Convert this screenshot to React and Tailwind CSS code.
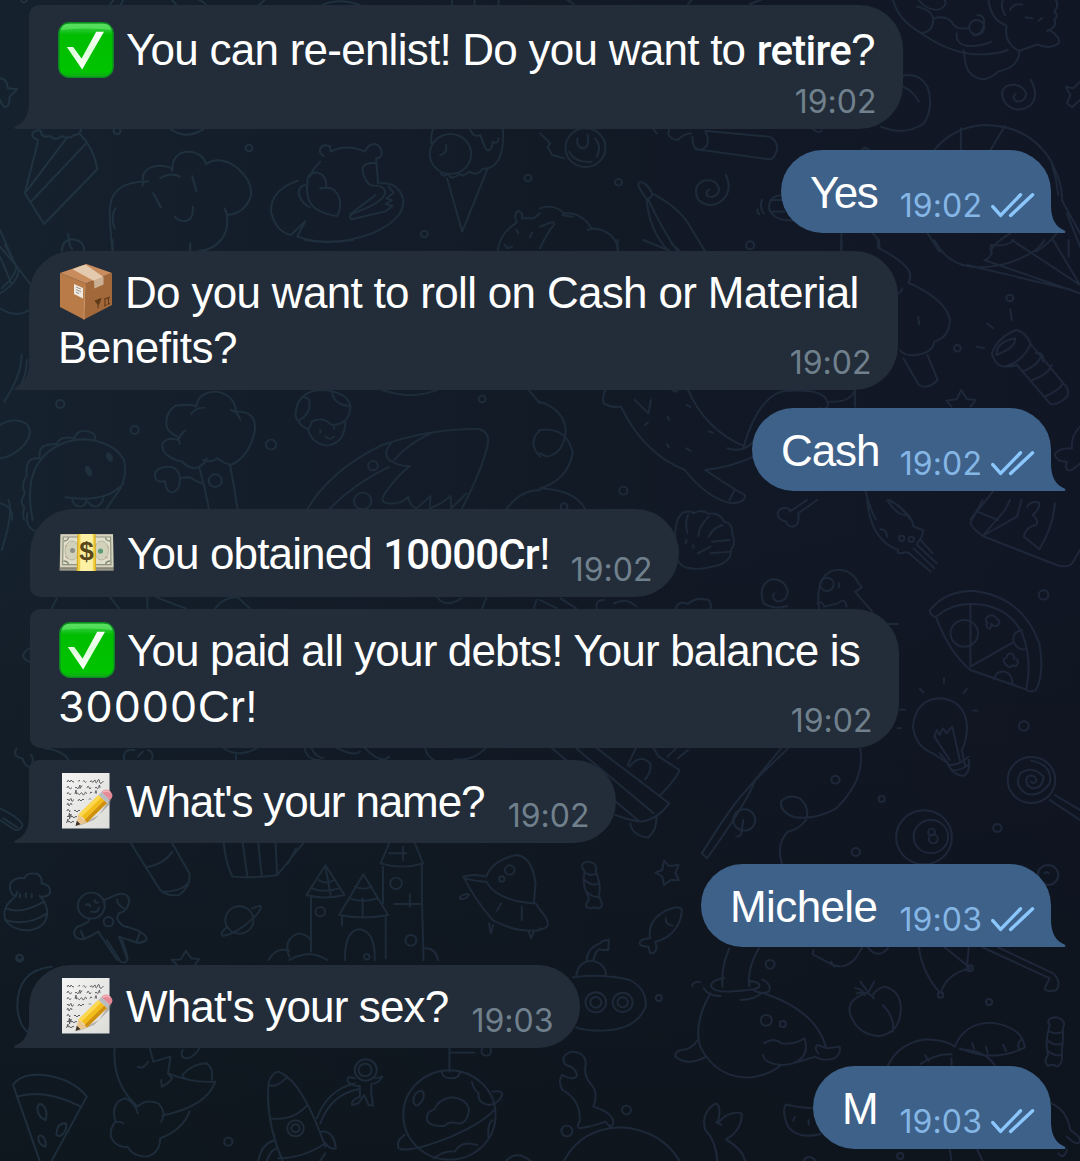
import React from "react";

/* ---------- Wallpaper ---------- */

/* Each tile of the wallpaper has its own origin; its paths are drawn on a finer grid. */
const tiles = [
  {
    x: 0,
    y: 0,
    d: `M110 425L72 580L128 672L283 507Q270 440 232 402M72 580L195 412M90 605L250 430M110 420Q90 415 95 398Q105 388 118 392Q120 415 145 408Q160 425 180 408Q200 420 215 405Q235 405 235 388
    M495 388Q540 420 590 388M327 755Q315 640 320 620Q325 550 415 545Q410 500 465 497Q500 500 500 512Q500 455 550 455Q590 460 598 492Q640 465 690 505Q735 545 728 590Q710 640 662 645M413 557Q418 540 430 545M465 535Q495 515 522 530M558 528L570 573M445 580L467 622M560 620Q562 665 533 663Q515 663 508 650M652 625Q665 650 657 690Q640 745 575 755M335 625Q320 650 333 685M552 735V755
    M198 702Q200 740 210 748M180 755Q178 720 212 718Q245 722 245 755M0 690L38 780M0 235Q20 235 23 265L50 268L28 290Q28 320 15 322Q5 315 0 300
    M940 468Q925 460 930 445Q940 430 958 440L960 455Q1005 430 1060 455Q1068 432 1090 432Q1110 440 1108 465Q1103 475 1092 475L1098 550M930 485Q905 510 900 530M893 545Q890 520 920 517Q948 525 948 560M893 545Q885 600 915 625Q945 645 980 648Q1000 600 970 570Q958 560 930 565M1092 490Q1055 485 1052 510Q1060 550 1080 557Q1120 555 1118 580Q1110 610 1025 640Q1010 648 1020 658L1118 635L1140 618L1120 612L1138 600L1122 595L1143 578L1128 560M1018 642L1090 585M865 542Q785 570 787 635Q800 695 845 705L887 663L863 710Q960 745 1080 700Q1180 655 1170 595Q1155 545 1105 550M885 555Q865 560 868 585Q880 615 900 622
    M1253 430Q1250 400 1258 388M1295 435Q1300 460 1278 465M1280 520Q1290 535 1300 520Q1310 545 1335 520Q1340 535 1362 515Q1385 530 1400 508Q1430 505 1440 490Q1465 460 1460 388M1298 535L1342 695L1415 508M1365 388Q1375 415 1395 405Q1405 440 1415 452Q1430 450 1430 425Q1445 435 1448 415
    M1445 755Q1450 700 1500 668Q1490 640 1505 632Q1520 640 1515 655L1550 655L1568 640M1500 690L1505 700M1545 698L1538 712M1465 735l10 10l12 -5
    M60 0q10 15 18 0M318 15L330 0M350 15L358 0M500 0L512 15M580 0L597 12M752 15L768 0M935 15Q985 -8 1045 15M1312 15V0M1378 15V0M1448 15V0`,
    c: [[340, 392, 10], [723, 444, 10], [1232, 702, 10], [1533, 534, 10], [1308, 462, 60]],
  },
  {
    x: 540,
    y: 0,
    d: `M80 0L98 12M430 12L440 0M610 12L640 0M1025 0Q1040 60 1105 98Q1190 160 1270 163Q1320 165 1358 150M1100 0Q1125 35 1160 28Q1185 15 1175 0M1095 20Q1140 30 1142 60Q1140 95 1110 98M1145 55Q1175 45 1195 65Q1205 90 1240 85M1210 100Q1205 130 1240 138Q1280 140 1310 125M1270 45q25 0 18 35q-10 30 -30 25M1302 0Q1310 60 1352 75M1350 45Q1335 15 1345 0M1355 80Q1345 125 1390 153L1445 133Q1480 150 1505 130Q1515 115 1480 90M1498 0q10 20 -5 35q15 10 0 25q10 20 -20 33M1410 52l20 3M1448 62l10 -8M1365 30Q1375 8 1400 14M1230 150Q1235 200 1245 215Q1285 260 1330 215Q1375 205 1385 180Q1395 165 1390 153
    M1425 240Q1450 285 1425 315Q1385 345 1352 310Q1330 275 1355 258Q1395 245 1412 280Q1410 305 1385 305Q1368 295 1380 282M1568 245L1548 265L1527 260L1540 285L1530 310L1545 322L1568 300
    M1050 228Q1100 215 1125 260Q1145 320 1115 370Q1060 410 990 380M1055 260Q1085 275 1100 305M108 415Q105 445 130 445Q145 430 138 405M160 415Q180 440 165 470M85 455Q100 490 150 485M0 400L30 430L22 440L35 465L70 475
    M540 525Q560 570 530 600Q495 630 460 600Q440 560 475 542Q515 535 520 570Q515 595 490 590Q475 580 492 568M330 388l8 12M375 388Q365 415 400 420Q420 400 440 400M480 392Q500 440 465 450Q440 445 443 410M485 393L665 410Q690 420 688 450Q680 480 665 478L450 447M790 385q20 20 28 5
    M290 547Q275 550 310 597Q335 590 320 570Q305 545 290 547M310 597Q315 690 375 755M325 580Q400 620 430 670L480 755M315 600Q355 690 400 755M0 625Q40 610 70 640Q120 635 150 685Q220 690 228 755M0 745Q20 700 40 675Q45 660 20 672L0 680M65 645q20 5 30 5M138 690q15 -5 25 -3
    M708 585Q665 585 665 625Q680 665 735 660M670 600H700M668 635H710M645 600q-10 20 5 40M632 628q-3 8 5 15M1145 450Q1200 380 1290 375Q1420 375 1485 485Q1520 560 1515 600L1568 700M1222 385V450M1350 378L1308 450M1485 485q15 50 20 100M1530 640L1568 740M875 700V755M965 700Q990 720 985 745M1125 700L1160 755M1365 700Q1310 735 1310 755M1500 700Q1480 730 1440 755M935 448l8 -5l10 6`,
    c: [[132, 443, 58], [228, 547, 10], [610, 736, 12], [1268, 82, 22]],
  },
  {
    x: 0,
    y: 240,
    d: `M0 20L48 78L88 132M0 50L33 130M15 15L48 80Q45 110 5 145M55 90Q50 130 0 160M0 205Q45 235 85 210M62 345Q65 400 12 485M78 360Q75 420 55 440M327 0V30M552 10V30M640 0Q620 30 580 32M885 0Q950 12 1025 0
    M0 555Q40 530 75 550Q100 575 70 615Q40 650 0 655M0 790Q40 800 35 840M95 840Q75 740 105 680Q150 600 245 598Q330 605 360 660Q370 700 350 745L310 805M190 772Q310 790 358 730M210 780Q215 800 235 800Q250 795 250 782M255 785q10 15 25 15q15 -5 20 -25M115 650Q110 610 165 612Q175 585 215 595Q230 560 270 580Q280 590 275 600M115 655Q70 650 78 705Q60 735 72 760Q55 790 70 800Q65 830 70 840
    M555 522Q565 505 592 503M570 500Q560 490 510 497Q475 520 485 565Q495 580 515 590M570 500Q575 455 630 455Q680 465 685 512M670 510Q690 515 698 540M690 515Q745 515 740 570Q725 650 670 675Q650 670 630 655M600 655Q590 680 565 685Q540 680 530 665L510 660Q465 640 472 610Q485 590 518 600Q525 580 538 572M518 595L522 612M578 680Q595 740 607 808M668 675Q680 740 690 808M590 660q25 10 40 -5M585 730Q570 725 552 712Q535 712 522 715Q520 680 485 680Q445 685 450 710Q455 730 480 723Q480 755 500 758Q525 750 522 715
    M868 545Q850 530 865 490Q885 450 935 450Q1010 455 1018 500Q1015 540 990 550Q960 560 955 548Q935 530 905 545Q900 565 893 568Q870 555 868 545M870 540Q905 520 898 480Q890 470 880 472M965 458Q970 495 1015 498M895 570Q905 610 950 617Q1000 610 1003 548M930 570v8M970 560v8M945 590q12 12 25 0
    M892 808Q960 690 1110 615Q1250 565 1390 567Q1425 575 1415 620Q1395 700 1340 808M1250 580Q1180 615 1145 660M1135 610Q1110 640 1130 660Q1160 680 1190 678Q1150 710 1118 760Q1100 785 1125 790Q1165 795 1185 770Q1190 800 1210 805L1250 768L1248 805L1280 790L1308 768L1310 805L1355 760M955 808Q1030 730 1130 680M1110 450Q1200 480 1270 450M1535 450L1568 490M1568 570Q1530 610 1568 650M1470 808Q1510 750 1568 750`,
    c: [[175, 492, 12], [391, 570, 12], [787, 614, 15], [1400, 477, 10], [625, 722, 19], [1083, 677, 14], [1053, 783, 25]],
  },
  {
    x: 540,
    y: 240,
    d: `M225 0V30M300 0L375 32M380 10L405 32M875 0V30M985 0Q975 20 985 25Q1050 60 1070 90Q1080 110 1070 128Q1180 180 1190 240Q1190 290 1145 305Q1140 340 1090 345Q1060 350 1045 330M1055 355L1100 435Q1125 450 1155 420L1125 345M1098 230l3 22M1040 160q10 -5 12 -15
    M1145 0Q1180 70 1250 80Q1350 90 1440 30Q1460 10 1465 0M1375 0Q1360 20 1310 15Q1305 25 1312 40Q1300 60 1290 60L1568 160M1370 0L1568 135M1490 0L1568 135M1535 50V0M1240 75L1545 150
    M1365 208L1370 240M1298 250L1316 265M1268 320L1290 325M1383 270Q1330 290 1312 340Q1320 375 1345 380Q1400 370 1425 312Q1410 275 1383 270M1325 345Q1325 305 1380 295Q1380 325 1325 345M1345 380Q1370 380 1385 375L1480 490Q1500 500 1530 470Q1540 450 1520 430L1425 312M1400 395Q1450 375 1455 345M1440 340Q1465 335 1460 365M1430 420Q1480 400 1485 375M1465 470Q1510 450 1518 430
    M1223 450L1240 478L1265 480L1250 500M1223 450L1210 478L1180 482L1195 500M190 450Q180 470 185 490Q210 505 235 500Q300 640 420 690M430 450Q480 570 595 620M275 480L315 520L322 480M385 450q10 10 15 0M305 555l8 -8M370 530l5 10M425 495l12 6M490 575l12 3M368 612l6 10M425 625l12 8M420 690Q490 780 560 790Q600 785 595 765Q550 740 480 690M545 625Q590 640 620 605M480 690Q560 680 620 650M550 780l15 -30
    M590 625Q630 480 700 455Q830 440 835 490Q840 510 810 505M835 485Q900 490 915 450V500M0 485Q70 510 75 570Q70 640 20 650L0 640M0 570Q80 560 95 640Q80 720 0 745Q100 750 130 805M1568 560Q1540 590 1545 625Q1500 625 1495 645Q1500 665 1530 665Q1520 690 1540 692Q1560 680 1568 670M945 753Q955 800 975 838M1015 780Q1050 800 1075 838M1315 755L1250 838`,
    c: [[1364, 174, 10], [1212, 325, 10], [242, 752, 12], [70, 800, 10]],
  },
  {
    x: 0,
    y: 500,
    d: `M25 0Q40 40 5 150M80 40Q70 80 105 95M150 325L165 295M320 292L345 325M428 292V325M455 292Q510 315 540 325M625 325Q650 290 690 292L725 325M1270 292Q1290 325 1340 295M1400 325L1412 292M1550 325l8 -25M85 445Q50 470 85 485`,
    c: [],
  },
  {
    x: 540,
    y: 500,
    d: `M395 150Q385 60 415 38Q440 30 445 40Q470 25 490 42Q520 35 535 65Q560 70 558 100Q570 130 555 150Q555 190 500 200Q460 210 440 205Q410 205 400 180M430 45Q420 70 428 100M490 50Q460 80 460 108M530 75Q500 85 490 110M550 120L500 125M495 140L458 160M555 155L495 160M425 120l-2 10M445 135v8
    M805 0L750 40Q755 80 730 80Q715 75 715 65Q690 60 690 40Q695 20 720 25Q730 30 725 35L775 0M950 0Q960 120 1040 150Q1035 160 1050 160Q1060 155 1070 158L1135 215M1085 145L1145 205M1095 135L1152 190M1105 120L1140 160M1015 0Q1080 40 1085 80L1112 90Q1115 105 1095 130M1008 0Q1040 50 1065 45M988 88Q1005 85 1008 110
    M1285 0L1250 68Q1250 80 1285 108L1500 195Q1530 205 1545 190L1568 150M1285 108L1350 30L1365 0M1270 35L1330 60M1285 108L1385 50L1398 0M1415 20Q1425 0 1450 8Q1450 30 1430 45Q1450 60 1440 75Q1410 80 1405 110L1450 148Q1490 80 1495 10M718 318Q680 330 650 310Q630 260 670 238Q710 235 720 275Q715 305 690 305Q670 295 680 280
    M810 325Q800 230 850 212Q900 200 925 250L935 262L915 275M868 250v12M805 310q15 -10 20 10l40 -10q20 -20 25 10M915 275L935 300L965 335M1010 372H1040
    M1132 330Q1180 270 1260 273Q1400 290 1450 430Q1465 520 1440 570Q1425 580 1410 568L1250 510Q1190 460 1150 352Q1130 345 1132 330M1150 350Q1200 305 1270 313Q1360 320 1400 400Q1430 480 1412 568M1250 313V500L1372 428M1400 390Q1370 395 1375 425Q1385 450 1410 448M1300 350q15 -10 25 5q15 10 5 20q-10 8 -20 -3q0 20 -10 12q-8 -10 0 -15q-12 -10 0 -19M1350 490q-10 -15 5 -17q0 -15 15 -12q10 5 5 15q15 0 12 15q-5 12 -15 5q-8 12 -22 -6M1318 538Q1325 512 1350 515Q1370 520 1372 550
    M1160 595Q1090 600 1083 680Q1090 740 1140 760L1185 790M1160 595Q1235 600 1240 680Q1240 720 1225 750L1235 800M1190 780L1145 710L1152 690L1160 705L1170 685L1180 700L1197 680L1220 785M1173 535v15M1103 567l10 10M1240 567l-10 12M1045 629h15M1258 632h12M1038 685h10
    M0 300L50 325M60 295l45 30M165 325Q160 300 185 300M215 310Q250 290 280 320M395 325Q400 300 430 312Q450 290 490 300Q500 315 495 325`,
    c: [[1050, 115, 8], [1078, 118, 8], [1462, 285, 14], [1405, 678, 14], [833, 253, 20], [1232, 400, 40]],
  },
  {
    x: 0,
    y: 740,
    d: `M48 25Q35 50 65 55Q75 85 90 80Q100 55 90 45M130 25Q180 30 200 60M360 60Q355 25 390 30M430 30Q450 40 440 60M400 50l15 -15M650 25Q690 55 745 25M685 45V60M885 25Q890 60 930 60M905 25q10 25 35 30M980 25Q1030 50 1045 35M1060 25Q1110 75 1130 50M1235 25Q1240 50 1260 60M1410 25Q1370 65 1320 58M0 205Q60 235 65 255Q60 275 40 268L0 240M10 235L50 262
    M380 310L465 450Q485 470 520 465Q555 440 550 400L500 310M425 382Q480 370 500 335M470 455Q530 455 548 425M650 310Q655 370 675 410Q740 415 805 405L880 310M705 310L718 408M750 310L760 408M800 310L805 405M860 325L835 372
    M45 470Q25 460 30 430Q45 410 70 415Q80 395 110 402Q125 415 120 430Q150 435 145 460Q135 472 120 470M45 470L50 455M40 475Q5 500 15 540Q40 575 90 570Q140 560 137 510Q130 480 115 468M18 505Q60 525 128 485M15 540Q80 560 137 520M58 462v10M75 460v12M92 462v10
    M250 495q8 -8 12 5M275 480q-2 10 10 8M265 515q20 5 22 -12M303 480L345 462Q375 458 375 485Q370 515 345 520L340 535Q350 560 375 562Q430 580 425 600Q410 615 390 605L345 590Q350 600 370 660M255 535Q270 545 225 560Q205 580 225 595Q240 605 285 575L340 660M340 478Q340 495 360 505M395 607l12 -30M245 598l-10 -25
    M660 560Q635 580 648 588Q690 580 740 530Q765 500 755 497L732 505M945 375L890 465Q940 480 1000 465ZM925 420Q945 435 970 420M905 445q35 15 80 0M945 380L960 465M903 470V635M1055 403L985 525Q1055 540 1127 525ZM1030 440q25 12 50 0M1015 475q40 15 80 0M1053 475V530M993 530V555M1120 530V655M1130 310L1105 370Q1170 390 1228 370L1205 310M1130 340h50M1170 320V360M1112 380V490M1225 375V470L1230 660M1145 492H1225M1190 462V500M1002 660Q1000 570 1045 568Q1090 575 1088 660M840 650Q820 600 865 580Q900 585 903 605M780 660Q800 620 840 632M840 660Q900 625 950 660M1235 625Q1265 625 1272 660
    M1345 410Q1380 480 1430 540Q1500 580 1568 570M1345 410Q1375 400 1412 410Q1430 360 1500 345Q1545 350 1555 430L1550 490M1412 425Q1440 480 1545 490M1350 415Q1390 425 1412 425M1455 490L1443 512M1515 500V540M1555 490L1568 510M1335 475Q1335 465 1358 462M1338 477Q1350 480 1362 465M1420 550L1425 580L1432 555M1535 575L1542 595L1550 575`,
    c: [[57, 652, 8], [265, 497, 39], [315, 545, 14], [695, 540, 41], [930, 515, 14], [1150, 430, 17], [1193, 601, 16], [1065, 650, 8], [1480, 390, 14], [1457, 417, 8]],
  },
  {
    x: 540,
    y: 740,
    d: `M35 25L290 245Q340 240 375 190L165 25M105 25L330 220M255 75L278 25M260 80Q290 40 320 70Q325 95 305 118M350 165Q400 110 405 90L345 50L330 25M370 50L395 25M400 55L430 30M218 225Q260 240 290 245M262 250Q270 290 315 292Q340 270 338 230
    M720 25L625 120Q600 190 485 355L470 340Q560 190 600 150L700 25M590 240L585 275Q585 290 570 290M930 25Q945 120 860 205Q800 240 740 232Q695 215 700 185Q720 160 755 175Q785 205 772 240Q750 270 720 275Q685 310 702 370
    M1160 40Q1180 60 1185 75Q1200 105 1230 108Q1250 95 1245 60M1188 75Q1220 75 1245 50M1195 92Q1230 90 1245 72M1427 62Q1490 75 1480 130Q1450 175 1410 160Q1375 135 1395 100Q1430 75 1462 110Q1460 145 1430 145Q1405 135 1415 110Q1435 100 1442 120Q1435 135 1425 125M1495 165L1568 210M1480 180L1568 240
    M130 395Q110 370 140 365Q170 370 162 395Q180 440 170 470Q190 500 170 505Q155 500 150 505Q130 505 135 490Q145 480 140 470Q120 430 130 395M135 400Q150 410 165 400M130 420Q150 440 172 430M135 455q20 20 38 15M360 362L375 378L403 375L393 398L403 420L380 420L360 435L355 410L335 398L355 390Z
    M320 595Q310 540 370 510Q400 495 412 508Q410 560 370 590Q345 605 335 605Q345 640 320 640L315 620Q285 620 290 605Q300 595 320 595M365 535Q365 555 385 557M0 510Q30 545 20 560Q10 570 0 565M1465 400q5 -6 12 0`,
    c: [[593, 240, 32], [858, 119, 12], [992, 177, 9], [1328, 264, 12], [917, 336, 12], [1427, 120, 69], [1115, 292, 81], [1135, 290, 50], [1137, 276, 10], [1142, 297, 13], [1475, 405, 30]],
  },
  {
    x: 0,
    y: 940,
    d: `M310 0L350 65Q370 75 370 50L355 0M375 0Q400 15 425 0M150 80Q50 90 50 200Q55 260 85 280M540 32L555 55L578 58L565 75M540 32L525 58L498 60L515 75M38 435Q60 400 125 405Q210 415 252 470L150 662M38 435L115 662M48 470Q130 445 235 500M110 515Q105 490 120 492Q140 505 133 540Q115 535 110 515M165 575Q165 550 192 550Q195 575 175 588Q160 590 165 575M112 600Q108 585 120 587Q135 595 132 620Q115 615 112 600
    M333 325Q325 430 400 500M435 325L445 365L495 350L488 400L500 415Q490 430 470 440L468 420M400 380Q415 390 430 365M488 400Q560 430 625 425Q600 500 470 527M530 405Q560 370 600 370Q620 385 615 420M530 405Q535 418 545 418M530 330Q520 355 545 355Q570 345 578 325M400 500Q420 475 460 490Q485 520 468 545M400 520Q395 490 365 475Q320 485 335 545Q310 580 330 605Q350 625 370 620Q385 650 425 650Q465 640 465 595Q530 570 550 515M335 545Q355 545 358 550
    M780 430Q790 395 810 395Q850 415 880 470Q910 520 945 620M780 430Q770 540 820 662M780 435Q800 445 830 415M785 535Q850 545 893 495M808 655Q880 655 945 610M930 575Q970 570 975 625Q960 630 945 610M750 662Q760 610 800 600M775 662Q785 630 805 625M945 640L930 662M920 535Q950 450 1030 430M930 550Q960 465 1040 448
    M1030 415Q1005 405 1010 425Q1030 440 1045 438L1045 470Q1020 480 1022 495L1040 490L1058 465L1070 495L1083 497L1078 460V432Q1100 430 1110 410L1090 415M1305 325V395M1310 338H1378M1282 395Q1285 415 1310 415Q1335 415 1335 395M1370 425Q1375 450 1390 460Q1385 490 1420 495Q1450 490 1458 465Q1460 450 1430 455M1200 485Q1200 455 1225 452Q1240 470 1215 495Q1205 500 1200 485M1240 540Q1235 515 1262 508Q1270 480 1310 472Q1355 475 1362 510Q1355 560 1320 548Q1300 545 1290 558Q1245 560 1240 540M1175 585Q1150 600 1157 625Q1190 640 1310 590Q1400 550 1435 510M1260 655Q1290 630 1320 635Q1340 600 1385 615M1418 590Q1415 550 1430 540M1470 662Q1500 630 1540 662`,
    c: [[57, 55, 10], [663, 605, 12], [1412, 333, 14], [858, 565, 24], [858, 565, 12], [1062, 390, 32], [1060, 390, 19], [1305, 525, 134]],
  },
  {
    x: 540,
    y: 940,
    d: `M105 108Q110 65 150 62Q190 70 192 105M135 60Q140 20 175 10Q180 0 200 0L198 30L180 30Q165 20 155 60M95 112Q180 100 260 120Q310 145 307 200Q280 270 180 272Q130 272 105 262M550 25Q525 80 530 140M635 25Q600 90 608 140M535 115Q495 120 497 140Q510 160 570 153Q630 150 637 140Q640 125 605 122M465 125Q440 125 442 140M645 118Q675 135 665 155Q640 165 620 150M475 145Q490 170 525 168M583 180Q625 178 645 158M495 160Q445 250 465 320Q510 410 600 413Q660 410 700 375Q650 370 648 345M645 158Q800 210 830 320M650 310Q680 290 700 310Q740 315 768 295Q785 350 735 370Q715 375 700 375M735 370L800 350Q820 365 855 355Q875 340 870 320L835 325L805 315Q795 325 808 340M458 300Q440 330 410 330Q390 335 393 350Q430 380 482 350
    M795 30Q785 45 805 50L850 75Q890 90 920 50L935 22M845 65l10 15M950 20Q980 60 1010 25M1100 22Q1110 100 1163 160Q1180 100 1250 85L1175 22M1245 22L1240 75M1285 22L1480 115L1465 145Q1470 158 1500 150Q1515 125 1490 100L1330 22M945 160Q890 180 900 220Q920 285 985 288Q1045 280 1048 205Q1045 150 1000 140Q970 150 965 170M995 195Q1030 230 1025 275M915 145Q935 145 942 165M930 125Q945 145 955 160M970 125L955 155M970 175Q950 150 920 160
    M1480 255Q1465 235 1500 232Q1530 240 1518 265Q1520 300 1515 330Q1520 375 1500 380Q1490 370 1475 378Q1460 365 1475 345Q1465 310 1480 255M1480 275Q1500 285 1518 275M1472 300q20 20 48 10M1472 330q20 20 42 15M1010 378Q1040 310 1120 298Q1180 300 1205 320Q1230 250 1310 248Q1400 260 1408 322Q1320 370 1220 325M1255 310l5 15M1295 320l5 18M1345 315l8 18M1395 300q-10 10 -5 25M1105 372Q1150 340 1195 343M1220 328Q1290 330 1320 375M1118 345l10 18M1195 355v20
    M115 545Q120 480 65 450Q50 420 65 405Q100 425 108 405Q100 380 75 375Q55 350 90 335Q130 335 133 370Q125 410 150 435Q170 460 155 500Q215 520 213 550L205 562L190 545Q150 560 115 565Q105 560 115 545M70 662Q120 565 235 562Q350 570 405 662M515 662Q510 600 480 570Q465 520 510 490Q530 500 515 550Q550 510 585 520Q590 550 560 585L540 598Q590 630 595 662M512 545l15 10
    M815 582Q750 600 720 560Q700 510 715 493Q735 500 790 505M740 530l-5 12M780 540v14M1190 630L1195 662M1270 630L1285 662M1485 490Q1530 510 1540 570Q1568 590 1568 600M1530 590Q1560 620 1568 605M1505 640Q1520 660 1530 630M765 662Q780 640 800 662`,
    c: [[78, 573, 16], [251, 510, 13], [1046, 648, 9], [345, 174, 9], [668, 73, 13], [1304, 186, 9], [162, 187, 30], [162, 187, 16], [240, 187, 29], [240, 187, 15], [657, 241, 16], [705, 252, 9], [1248, 85, 9], [1163, 165, 8]],
  },
];

function Wallpaper() {
  return (
    <svg className="absolute inset-0" width="1080" height="1161" viewBox="0 0 1080 1161" fill="none" aria-hidden="true">
      <defs>
        <linearGradient id="ink" gradientUnits="userSpaceOnUse" x1="0" y1="0" x2="1080" y2="400">
          <stop offset="0" stopColor="#213441" />
          <stop offset="0.5" stopColor="#1d2b39" />
          <stop offset="1" stopColor="#1d2739" />
        </linearGradient>
      </defs>
      <mask id="lines" maskUnits="userSpaceOnUse" x="0" y="0" width="1080" height="1161">
        <g stroke="white" strokeWidth="5.8" strokeLinejoin="round" strokeLinecap="round">
          {tiles.map((t) => (
            <g key={`${t.x}-${t.y}`} transform={`translate(${t.x} ${t.y}) scale(0.3444 0.3333)`}>
              <path d={t.d} />
              {t.c.map(([cx, cy, r], i) => (
                <ellipse key={i} cx={cx} cy={cy} rx={r} ry={r} />
              ))}
            </g>
          ))}
          <g fill="white" stroke="none">
            <ellipse cx="88.5" cy="471" rx="3" ry="5.5" transform="rotate(-25 88.5 471)" />
            <ellipse cx="109.5" cy="457" rx="3" ry="5" transform="rotate(-25 109.5 457)" />
          </g>
        </g>
      </mask>
      <rect width="1080" height="1161" fill="url(#ink)" mask="url(#lines)" />
    </svg>
  );
}

/* ---------- Emoji ---------- */

function CheckEmoji() {
  return (
    <svg width="57" height="56" viewBox="0 0 57 56" className="shrink-0" aria-hidden="true">
      <defs>
        <linearGradient id="ck" x1="0" y1="0" x2="0" y2="1">
          <stop offset="0" stopColor="#3fd84a" />
          <stop offset="0.16" stopColor="#18c420" />
          <stop offset="0.22" stopColor="#00bd00" />
          <stop offset="0.9" stopColor="#00c400" />
          <stop offset="1" stopColor="#12a81c" />
        </linearGradient>
        <linearGradient id="ckm" x1="0" y1="0" x2="0" y2="1">
          <stop offset="0" stopColor="#ffffff" />
          <stop offset="0.5" stopColor="#dffbdc" />
          <stop offset="1" stopColor="#ffffff" />
        </linearGradient>
      </defs>
      <rect x="0.8" y="0.8" width="54.4" height="54.6" rx="10.5" fill="url(#ck)" stroke="#0f8a22" strokeWidth="1.4" />
      <path d="M9 1.9H48Q52 2.5 53.4 8Q28 5 2.6 8Q4 2.5 9 1.9Z" fill="#6be672" opacity="0.6" />
      <path d="M8.8 25H15.2L23.6 36.5L38.2 9.8H46L24.2 47.4Z" fill="url(#ckm)" />
    </svg>
  );
}

function BoxEmoji() {
  return (
    <svg width="57" height="56" viewBox="0 0 57 56" className="shrink-0" aria-hidden="true">
      <path d="M28.5 0L54 9L28 19.5L2 9Z" fill="#c98c5c" />
      <path d="M2 9L28 19.5L26 55.5L2 43Z" fill="#b97b48" />
      <path d="M28 19.5L54 9V41L26 55.5Z" fill="#a3683a" />
      <path d="M27 22L26 55.5" stroke="#cd9868" strokeWidth="1" />
      <path d="M21.5 2.5L27.5 0.6L45.5 13L36 17L14.5 5.2Z" fill="#e3c9ad" />
      <path d="M36 16.6L45.5 12.8V20.4L36.4 24.6Z" fill="#cbb094" />
      <path d="M16 20L25 24V34.5L16 30Z" fill="#efe9e0" />
      <path d="M18 23l5 2.2M18 25.6l5 2.2M18 28.2l3 1.4" stroke="#8f8a88" strokeWidth="0.9" />
      <path d="M37 37l6 -2.5l-2.6 6.5zM40 41l0 3.5" fill="#5d3919" stroke="#5d3919" strokeWidth="1" />
      <path d="M47 35v6.5M50.5 33.5v6.5M46 35.3l6 -2.4M46 42l2.5 -1M49.5 40.6l2.5 -1" stroke="#5d3919" strokeWidth="1.1" fill="none" />
    </svg>
  );
}

function MoneyEmoji() {
  return (
    <svg width="57" height="56" viewBox="0 0 57 56" className="shrink-0" aria-hidden="true">
      <path d="M1.5 8H54L54.6 44.5H0.6Z" fill="#a9a695" />
      <path d="M1.6 8.4H54L54.4 41H1Z" fill="#d5d3bd" />
      <path d="M4.2 11H51.6L52 38.6H3.6Z" fill="#e0dfcc" stroke="#8f9481" strokeWidth="1.2" />
      <path d="M1 42.2H54.4" stroke="#77756a" strokeWidth="0.9" />
      <path d="M0.8 44H54.6" stroke="#8a877a" strokeWidth="1.2" />
      <path d="M5 15q4 0 4.5 -3.5M51 15q-4 0 -4.5 -3.5M4.5 35q4 0 5 3M51.500 35q-4 0 -5 3" stroke="#868a78" strokeWidth="1.4" fill="none" />
      <ellipse cx="13" cy="24.5" rx="7" ry="9.5" fill="#d2d2bb" stroke="#aaa98f" strokeWidth="0.7" />
      <ellipse cx="42.5" cy="24.5" rx="7" ry="9.5" fill="#d2d2bb" stroke="#aaa98f" strokeWidth="0.7" />
      <circle cx="13.5" cy="24.5" r="2.5" fill="#8c8f83" />
      <circle cx="41.5" cy="25" r="2.6" fill="#5f9b78" />
      <path d="M6 30l3 3M48 20l2 2M6 20h2M46 31l3 1" stroke="#c99a8c" strokeWidth="1" />
      <path d="M19 8H36L36.500 45H18Z" fill="#f1d34a" />
      <path d="M21.500 8H33.800V45H21.200Z" fill="#fbf0a4" />
      <path d="M19 8L18.200 45M36 8L36.500 45" stroke="#d9ac1e" strokeWidth="1.2" />
      <text x="27.5" y="34" textAnchor="middle" fontSize="26" fontWeight="700" fontFamily="'Liberation Sans', sans-serif" fill="#57471a">$</text>
    </svg>
  );
}

function MemoEmoji() {
  return (
    <svg width="57" height="56" viewBox="0 0 57 56" className="shrink-0" aria-hidden="true">
      <defs>
        <linearGradient id="paper" x1="0" y1="0" x2="1" y2="1">
          <stop offset="0" stopColor="#f4f5f4" />
          <stop offset="1" stopColor="#dcdcd8" />
        </linearGradient>
      </defs>
      <rect x="4" y="0" width="47.5" height="55.5" fill="url(#paper)" />
      <path
        d="M9 9q1 -3 2 -1t1.500 0t1.500 0t2 .5M20 8.500q1 -2 2 -.5M25 8.500q.8 -2 1.600 0t1.800 0M32 9q1 -2.500 2 -.5t2 -.5t1.500 .5t2 -.5t2 .5t4 -.5M9 15q1 -3.500 2 -.5t3 0M17 15q1 -1.500 2 0t1.500 0l1.500 -3l0 3.500l2 -3M29 15q1 -3.500 2 -.5t2 0M37 15q1 -1.500 2 0t1.500 -.5l1 -2.500l.5 3M9 21q1 -3 2 -.5t2 0M17 21l1 -4l.5 4q1 -1.500 2 0t2 -.5t2 .5t2 -.5t2 .5M32 20.500q1 -3 2 -.5M37 20.500l1 -3l.5 3M9 27q1 -2 1.500 0t1.500 -.5t1.500 .5t2 -.5M20 28q1 -3 2 -1t2 0t2 0M31 26.500q1 -2 2 0M9 32q1 -3.500 1.500 -.5t1.500 0t2 .5M9 38q1 -3.500 2 -.5t1 0M16 38q1 -2 2 0t2 0t2 0M9 44q1 -2 1.500 0l1 -4l0 6l1.500 -5l0 3q1 -1.500 2 0t2 0t2 0M8.500 50l1.500 -4l0 3q1 -1.500 2 0t2 0t2 0"
        fill="none"
        stroke="#5d5d63"
        strokeWidth="1"
      />
      <path d="M18 54L41 42L55 21L52 31L36 47Z" fill="#77716a" opacity="0.45" />
      <path d="M17.500 53L20.500 41.500L29 49.500Z" fill="#e9c48c" />
      <path d="M17.500 53L18.800 47.800L22.500 51.200Z" fill="#3b302c" />
      <path d="M20.500 41.500L40.500 22L49 30L29 49.500Q26.500 45 20.500 41.500Z" fill="#f2bd1c" />
      <path d="M20.500 41.500L40.500 22L43.300 24.600L23.200 44Z" fill="#fbd850" />
      <path d="M26.600 47L46.400 27.600L49 30L29 49.500Z" fill="#cf8f10" />
      <path d="M40.500 22L43.500 19L52 27L49 30Z" fill="#b9bcc0" />
      <path d="M43.500 19Q48 14.500 52.500 18.500Q56.500 23 52 27Z" fill="#e58a96" />
      <path d="M45 19.200Q49 16.500 52 19.600" stroke="#f4b7bf" strokeWidth="1.4" fill="none" />
    </svg>
  );
}

function ReadTicks() {
  return (
    <svg width="44" height="26" viewBox="0 0 44 26" fill="none" stroke="#8bc7fd" strokeWidth="3.4" strokeLinecap="round" strokeLinejoin="round" aria-hidden="true">
      <path d="M1.8 13.600L9.600 22.400L29.500 1.800" />
      <path d="M19.600 22.400L41.600 1.800" />
    </svg>
  );
}

/* ---------- Bubbles ---------- */

function Tail({ side }) {
  return side === "left" ? (
    <svg className="absolute bottom-0 -left-[15px]" width="16" height="26" viewBox="0 0 16 26" aria-hidden="true">
      <path d="M15 0C14.500 13 10 20 1 23.500Q-1 25 1.500 26H16V0Z" fill="#222d39" />
    </svg>
  ) : (
    <svg className="absolute bottom-0 -right-[15px]" width="16" height="26" viewBox="0 0 16 26" aria-hidden="true">
      <path d="M1 0C1.500 13 6 20 14.500 23.500Q16.500 25 14.500 26H0V0Z" fill="#3e6189" />
    </svg>
  );
}

function Incoming({ className, tail, time, children }) {
  return (
    <div className={`relative grid bg-[#222d39] text-white ${className}`}>
      {tail && <Tail side="left" />}
      <div className="col-start-1 row-start-1 self-start pl-[29px] text-[44px] leading-[56px] whitespace-nowrap">
        {children}
      </div>
      <time className="col-start-1 row-start-1 mr-[26.5px] mb-[9.5px] self-end justify-self-end font-['Inter'] text-[32px] leading-9 text-[#71808d] [font-feature-settings:'calt'_0]">
        {time}
      </time>
    </div>
  );
}

function Outgoing({ className, time, children }) {
  return (
    <div className={`relative mr-[29px] ml-auto flex h-[83px] items-end justify-between rounded-l-[42px] rounded-tr-[42px] bg-[#3e6189] pr-4 pl-[29px] ${className}`}>
      <Tail side="right" />
      <span className="mb-[12.5px] text-[44px] leading-[56px] text-white">{children}</span>
      <span className="mb-[9.5px] flex items-center">
        <time className="mr-[9px] font-['Inter'] text-[32px] leading-9 tracking-[0.1px] text-[#85b6e6] [font-feature-settings:'calt'_0]">{time}</time>
        <ReadTicks />
      </span>
    </div>
  );
}

function Line({ emoji, className, children }) {
  return (
    <div className="flex h-14 items-center">
      {emoji}
      <span className={`mt-px ${className}`}>{children}</span>
    </div>
  );
}

export default function App() {
  return (
    <main className="relative h-[1161px] w-[1080px] overflow-hidden bg-linear-to-r from-[#15212d] via-[#121a26] via-50% to-[#111624] font-['Liberation_Sans',Arial,sans-serif]">
      <div className="absolute inset-0 bg-linear-to-b from-transparent from-45% to-[#0d141b]/80" />
      <Wallpaper />
      <div className="relative flex flex-col pt-[5px]">
        <Incoming tail time="19:02" className="ml-[29px] h-[124px] w-[874px] rounded-tl-[10px] rounded-r-[44px] pt-[17px]">
          <Line emoji={<CheckEmoji />} className="ml-[11px] tracking-[-0.75px]">
            You can re-enlist! Do you want to{" "}
            <b className="font-['Roboto'] text-[42px] font-medium">retire</b>?
          </Line>
        </Incoming>

        <Outgoing time="19:02" className="mt-[21px] w-[270px]">
          <span className="tracking-[-1.5px]">Yes</span>
        </Outgoing>

        <Incoming tail time="19:02" className="mt-[18px] ml-[29px] h-[139px] w-[869px] rounded-tl-[44px] rounded-r-[44px] pt-[13px]">
          <Line emoji={<BoxEmoji />} className="ml-[10px] tracking-[-0.69px]">
            Do you want to roll on Cash or Material
          </Line>
          <div className="tracking-[-0.5px]">Benefits?</div>
        </Incoming>

        <Outgoing time="19:02" className="mt-[18px] w-[299px]">
          <span className="tracking-[-1.1px]">Cash</span>
        </Outgoing>

        <Incoming time="19:02" className="mt-[18px] ml-[30px] h-[88px] w-[649px] rounded-tl-[44px] rounded-r-[44px] rounded-bl-[10px] pt-[17px]">
          <Line emoji={<MoneyEmoji />} className="ml-[11px] tracking-[-0.87px]">
            You obtained <b className="font-['Roboto'] text-[42px] font-medium">10000Cr</b>!
          </Line>
        </Incoming>

        <Incoming time="19:02" className="mt-[12px] ml-[30px] h-[139px] w-[869px] rounded-l-[10px] rounded-r-[44px] pt-[13px]">
          <Line emoji={<CheckEmoji />} className="ml-[11px] tracking-[-0.84px]">
            You paid all your debts! Your balance is
          </Line>
          <div className="-ml-px">
            <span className="font-['Inter'] text-[43px] tracking-[1px]">30000</span>
            <span className="tracking-[0.4px]">Cr!</span>
          </div>
        </Incoming>

        <Incoming tail time="19:02" className="mt-[12px] ml-[29px] h-[83px] w-[587px] rounded-tl-[10px] rounded-r-[42px] pt-[13px]">
          <Line emoji={<MemoEmoji />} className="ml-[11px] tracking-[-1.14px]">
            What's your name?
          </Line>
        </Incoming>

        <Outgoing time="19:03" className="mt-[21px] w-[350px]">
          <span className="tracking-[-0.6px]">Michele</span>
        </Outgoing>

        <Incoming tail time="19:03" className="mt-[18px] ml-[29px] h-[83px] w-[551px] rounded-tl-[42px] rounded-r-[42px] pt-[13px]">
          <Line emoji={<MemoEmoji />} className="ml-[11px] tracking-[-0.86px]">
            What's your sex?
          </Line>
        </Incoming>

        <Outgoing time="19:03" className="mt-[18px] w-[238px]">M</Outgoing>
      </div>
    </main>
  );
}
